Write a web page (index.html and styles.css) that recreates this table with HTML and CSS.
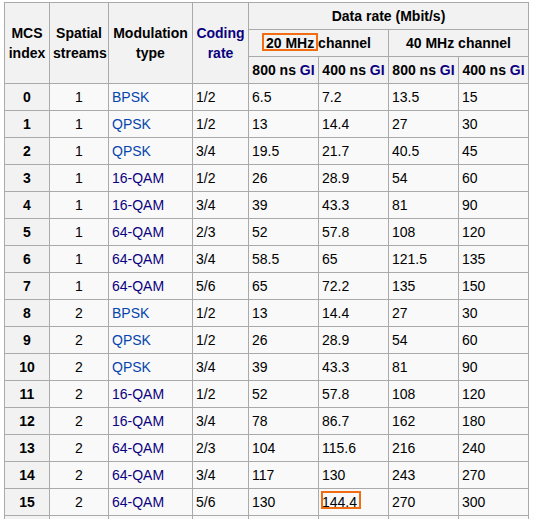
FILE: index.html
```html
<!DOCTYPE html>
<html>
<head>
<meta charset="utf-8">
<link rel="stylesheet" href="styles.css">
</head>
<body>
<table class="wikitable">
  <colgroup>
    <col class="c-mcs"><col class="c-ss"><col class="c-mod"><col class="c-cr">
    <col class="c-rate"><col class="c-rate"><col class="c-rate"><col class="c-rate">
  </colgroup>
  <thead>
    <tr>
      <th rowspan="3">MCS<br>index</th>
      <th rowspan="3">Spatial<br>streams</th>
      <th rowspan="3">Modulation<br>type</th>
      <th rowspan="3"><a class="visited" href="#">Coding<br>rate</a></th>
      <th colspan="4">Data rate (Mbit/s)</th>
    </tr>
    <tr>
      <th colspan="2"><span class="hl hl-head">20 MHz</span> channel</th>
      <th colspan="2">40 MHz channel</th>
    </tr>
    <tr>
      <th>800 ns <a class="visited" href="#">GI</a></th>
      <th>400 ns <a class="visited" href="#">GI</a></th>
      <th>800 ns <a class="visited" href="#">GI</a></th>
      <th>400 ns <a class="visited" href="#">GI</a></th>
    </tr>
  </thead>
  <tbody>
    <tr><th>0</th><td class="ctr">1</td><td><a href="#">BPSK</a></td><td>1/2</td><td>6.5</td><td>7.2</td><td>13.5</td><td>15</td></tr>
    <tr><th>1</th><td class="ctr">1</td><td><a href="#">QPSK</a></td><td>1/2</td><td>13</td><td>14.4</td><td>27</td><td>30</td></tr>
    <tr><th>2</th><td class="ctr">1</td><td><a href="#">QPSK</a></td><td>3/4</td><td>19.5</td><td>21.7</td><td>40.5</td><td>45</td></tr>
    <tr><th>3</th><td class="ctr">1</td><td><a class="visited" href="#">16-QAM</a></td><td>1/2</td><td>26</td><td>28.9</td><td>54</td><td>60</td></tr>
    <tr><th>4</th><td class="ctr">1</td><td><a class="visited" href="#">16-QAM</a></td><td>3/4</td><td>39</td><td>43.3</td><td>81</td><td>90</td></tr>
    <tr><th>5</th><td class="ctr">1</td><td><a class="visited" href="#">64-QAM</a></td><td>2/3</td><td>52</td><td>57.8</td><td>108</td><td>120</td></tr>
    <tr><th>6</th><td class="ctr">1</td><td><a class="visited" href="#">64-QAM</a></td><td>3/4</td><td>58.5</td><td>65</td><td>121.5</td><td>135</td></tr>
    <tr><th>7</th><td class="ctr">1</td><td><a class="visited" href="#">64-QAM</a></td><td>5/6</td><td>65</td><td>72.2</td><td>135</td><td>150</td></tr>
    <tr><th>8</th><td class="ctr">2</td><td><a href="#">BPSK</a></td><td>1/2</td><td>13</td><td>14.4</td><td>27</td><td>30</td></tr>
    <tr><th>9</th><td class="ctr">2</td><td><a href="#">QPSK</a></td><td>1/2</td><td>26</td><td>28.9</td><td>54</td><td>60</td></tr>
    <tr><th>10</th><td class="ctr">2</td><td><a href="#">QPSK</a></td><td>3/4</td><td>39</td><td>43.3</td><td>81</td><td>90</td></tr>
    <tr><th>11</th><td class="ctr">2</td><td><a class="visited" href="#">16-QAM</a></td><td>1/2</td><td>52</td><td>57.8</td><td>108</td><td>120</td></tr>
    <tr><th>12</th><td class="ctr">2</td><td><a class="visited" href="#">16-QAM</a></td><td>3/4</td><td>78</td><td>86.7</td><td>162</td><td>180</td></tr>
    <tr><th>13</th><td class="ctr">2</td><td><a class="visited" href="#">64-QAM</a></td><td>2/3</td><td>104</td><td>115.6</td><td>216</td><td>240</td></tr>
    <tr><th>14</th><td class="ctr">2</td><td><a class="visited" href="#">64-QAM</a></td><td>3/4</td><td>117</td><td>130</td><td>243</td><td>270</td></tr>
    <tr><th>15</th><td class="ctr">2</td><td><a class="visited" href="#">64-QAM</a></td><td>5/6</td><td>130</td><td><span class="hl hl-cell">144.4</span></td><td>270</td><td>300</td></tr>
    <tr class="row-next"><th></th><td></td><td></td><td></td><td></td><td></td><td></td><td></td></tr>
  </tbody>
</table>
</body>
</html>
```

FILE: styles.css
```css
html, body {
  margin: 0;
  padding: 0;
  background: #ffffff;
}

body {
  font-family: "Liberation Sans", Arial, sans-serif;
  font-size: 14px;
  color: #000000;
}

.wikitable {
  margin: 2px 0 0 4px;
  border-collapse: collapse;
  table-layout: fixed;
  width: 525px;
  background: #f9f9f9;
  border: 1px solid #aaaaaa;
}

.c-mcs { width: 45px; }
.c-ss { width: 59px; }
.c-mod { width: 84px; }
.c-cr { width: 56px; }
.c-rate { width: 70px; }

.wikitable th,
.wikitable td {
  border: 1px solid #aaaaaa;
  padding: 3px 3px;
  line-height: 20px;
  white-space: nowrap;
}

.wikitable th {
  background: #f2f2f2;
  font-weight: bold;
  text-align: center;
  vertical-align: middle;
}

.wikitable td {
  text-align: left;
}

.wikitable td.ctr {
  text-align: center;
}

.wikitable .row-next {
  height: 27px;
}

a {
  color: #0645ad;
  text-decoration: none;
}

a.visited {
  color: #0b0080;
}

.hl {
  position: relative;
}

.hl::after {
  content: "";
  position: absolute;
  border: 2px solid #f26d12;
}

.hl-head::after {
  left: -4px;
  right: -4px;
  top: -2px;
  bottom: 0;
}

.hl-cell::after {
  left: -1px;
  right: -4px;
  top: -3px;
  bottom: 1px;
}
```
